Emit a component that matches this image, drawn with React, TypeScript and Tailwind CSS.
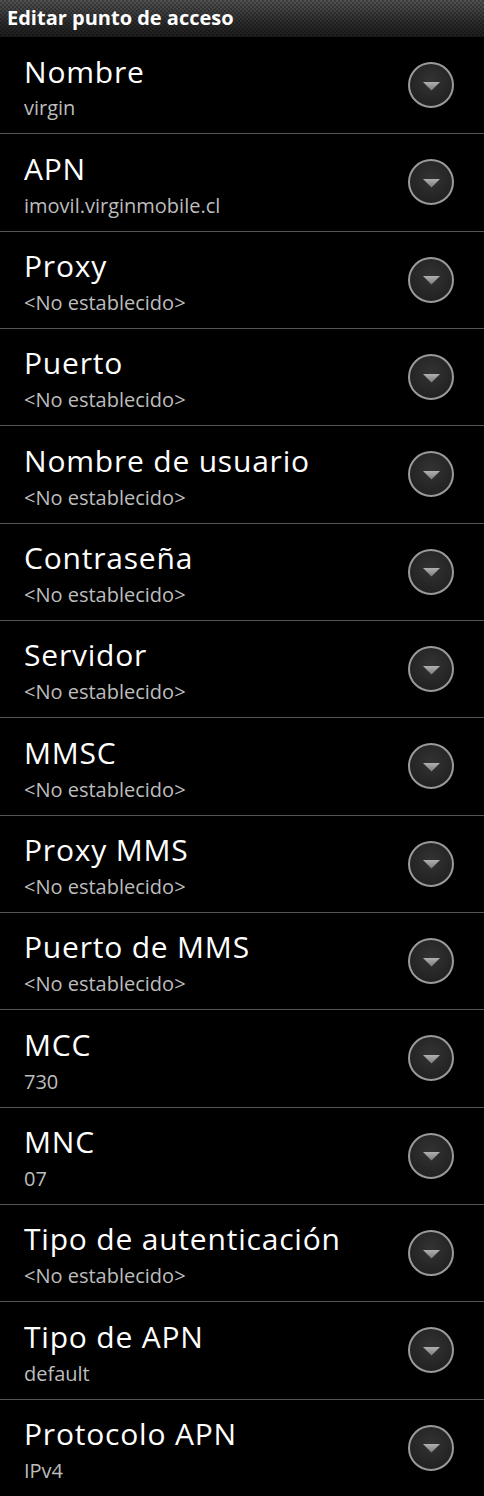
const items: [string, string][] = [
  ["Nombre", "virgin"],
  ["APN", "imovil.virginmobile.cl"],
  ["Proxy", "<No establecido>"],
  ["Puerto", "<No establecido>"],
  ["Nombre de usuario", "<No establecido>"],
  ["Contraseña", "<No establecido>"],
  ["Servidor", "<No establecido>"],
  ["MMSC", "<No establecido>"],
  ["Proxy MMS", "<No establecido>"],
  ["Puerto de MMS", "<No establecido>"],
  ["MCC", "730"],
  ["MNC", "07"],
  ["Tipo de autenticación", "<No establecido>"],
  ["Tipo de APN", "default"],
  ["Protocolo APN", "IPv4"],
];

function DropButton() {
  return (
    <div className="w-[46px] h-[46px] rounded-full border-2 border-[#9a9a9a] bg-[radial-gradient(circle_at_50%_40%,#333_0%,#232323_70%,#1c1c1c_100%)] flex items-center justify-center shrink-0">
      <svg width="17" height="9" viewBox="0 0 17 9" className="mt-[2px]">
        <defs>
          <linearGradient id="tri" x1="0" y1="0" x2="0" y2="1">
            <stop offset="0" stopColor="#b0b0b0" />
            <stop offset="1" stopColor="#7c7c7c" />
          </linearGradient>
        </defs>
        <polygon points="0,0 17,0 8.5,8.5" fill="url(#tri)" />
      </svg>
    </div>
  );
}

function Row({ title, value }: { title: string; value: string }) {
  return (
    <div className="h-[97.33px] border-b border-[#555] flex items-center justify-between pl-[24px] pr-[30px]">
      <div className="self-start pt-[19.5px] flex flex-col">
        <span className="text-[30px] leading-none tracking-[0.8px] text-white">{title}</span>
        <span className="mt-[11.8px] text-[20px] leading-none text-[#bdbdbd]">{value}</span>
      </div>
      <DropButton />
    </div>
  );
}

export default function App() {
  return (
    <div className="w-[484px] min-h-[1496px] bg-black font-['Open_Sans','DejaVu_Sans',sans-serif] overflow-hidden">
      {/* TITLE BAR */}
      <div className="h-[37px] flex items-center pl-[7px] pb-[1px] [background:repeating-conic-gradient(#00000040_0_25%,transparent_0_50%)_0_0/4px_4px,linear-gradient(#535353,#2c2c2c_60%,#1c1c1c)]">
        <h1 className="text-[20px] font-bold text-white leading-none">Editar punto de acceso</h1>
      </div>

      {/* LIST */}
      {items.map(([t, v]) => (
        <Row key={t} title={t} value={v} />
      ))}
    </div>
  );
}
